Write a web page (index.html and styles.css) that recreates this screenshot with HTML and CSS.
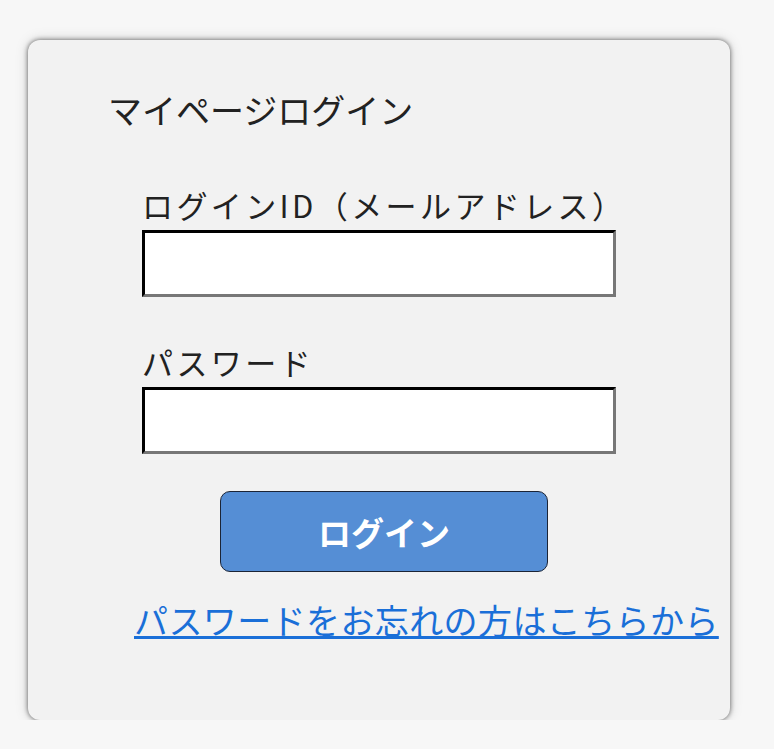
FILE: index.html
```html
<!DOCTYPE html>
<html lang="ja">
<head>
    <meta charset="UTF-8">
    <meta name="viewport" content="width=device-width, initial-scale=1.0">
    <title>マイページログイン</title>
    <link rel="stylesheet" href="styles.css">
</head>
<body>
    <div class="login-card">
        <h1 class="login-title">マイページログイン</h1>

        <form class="login-form">
            <label class="field">
                <span class="field-label">ログインID（メールアドレス）</span>
                <input type="text" class="field-input">
            </label>

            <label class="field">
                <span class="field-label">パスワード</span>
                <input type="password" class="field-input">
            </label>

            <button type="button" class="login-button">ログイン</button>
        </form>

        <a href="#" class="forgot-link">パスワードをお忘れの方はこちらから</a>
    </div>
</body>
</html>
```

FILE: styles.css
```css
body {
    margin: 0;
    background-color: #f7f7f7;
    font-family: "Noto Sans CJK JP", "Noto Sans", sans-serif;
    color: #222;
}

.login-card {
    width: 702px;
    height: 680px;
    margin: 40px 0 0 28px;
    box-sizing: border-box;
    padding: 53px 0 0 0;
    background: #f2f2f2;
    border-radius: 12px;
    /* sombra gris marcada + halo suave */
    box-shadow: 0 0 5px rgba(0, 0, 0, 0.6), 0 0 14px rgba(0, 0, 0, 0.15);
}

.login-title {
    margin: 0 0 0 80px;
    font-size: 34px;
    font-weight: normal;
    line-height: 1;
}

.login-form {
    display: flex;
    flex-direction: column;
    margin: 62px 0 0 114px;
}

.field {
    display: flex;
    flex-direction: column;
    margin-bottom: 49px;
}

.field-label {
    font-size: 31px;
    line-height: 1;
    letter-spacing: 3.4px;
    margin-bottom: 10px;
}

.field-input {
    width: 474px;
    height: 67px;
    box-sizing: border-box;
    margin: 0;
    border: 3px inset #777;
    border-top-color: #333;
    border-left-color: #333;
    background: #fff;
}

.login-button {
    width: 328px;
    height: 81px;
    margin: -12px 0 0 78px;
    background: #558ed5;
    border: 1px solid #1b2436;
    border-radius: 10px;
    color: #fff;
    font-family: inherit;
    font-size: 33px;
    font-weight: bold;
}

.forgot-link {
    display: block;
    margin: 28px 0 0 106px;
    font-size: 34px;
    line-height: 1.2;
    letter-spacing: 0.4px;
    color: #1a6fd8;
}
```
